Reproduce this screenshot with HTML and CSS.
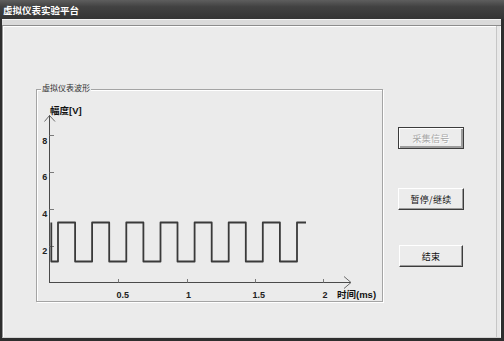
FILE: index.html
```html
<!DOCTYPE html>
<html lang="zh-CN">
  <head>
    <meta charset="UTF-8" />
    <title>虚拟仪表实验平台</title>
    <link rel="stylesheet" href="styles.css">
  </head>
  <body>
    <div class="window">
      <div class="titlebar">虚拟仪表实验平台</div>
      <div class="menubar"></div>
      <div class="client">
        <div class="group">
          <div class="group-title">虚拟仪表波形</div>
          <svg class="chart" width="345" height="211" viewBox="37 90 345 211">
            <!-- y axis -->
            <line class="axis" x1="49.5" y1="283" x2="49.5" y2="115" />
            <polyline class="arrow" points="44.5,121.5 49.5,115.5 55,121.5" />
            <line class="tick" x1="49.5" y1="135.5" x2="54" y2="135.5" />
            <line class="tick" x1="49.5" y1="172.5" x2="54" y2="172.5" />
            <line class="tick" x1="49.5" y1="209.5" x2="54" y2="209.5" />
            <line class="tick" x1="49.5" y1="246.5" x2="54" y2="246.5" />
            <text class="num" x="42.3" y="144.3">8</text>
            <text class="num" x="42.3" y="180.3">6</text>
            <text class="num" x="42.3" y="217.3">4</text>
            <text class="num" x="42.3" y="254.3">2</text>
            <text class="axis-label" x="50" y="114">幅度[V]</text>

            <!-- x axis -->
            <line class="axis" x1="49" y1="282.5" x2="351" y2="282.5" />
            <polyline class="arrow" points="344,276.5 351,282.5 344,288.5" />
            <line class="tick" x1="118.5" y1="282.5" x2="118.5" y2="279" />
            <line class="tick" x1="187.5" y1="282.5" x2="187.5" y2="279" />
            <line class="tick" x1="255.5" y1="282.5" x2="255.5" y2="279" />
            <line class="tick" x1="323.5" y1="282.5" x2="323.5" y2="279" />
            <text class="num" x="116.5" y="298">0.5</text>
            <text class="num" x="186" y="298">1</text>
            <text class="num" x="252.5" y="298">1.5</text>
            <text class="num" x="322.5" y="298">2</text>
            <text class="axis-label" x="337" y="298">时间(ms)</text>

            <!-- square wave -->
            <path class="wave" d="M51.3,222.5 V261.5 H58 V222.5 H75.1 V261.5 H92.1 V222.5 H109.2 V261.5 H126.3 V222.5 H143.4 V261.5 H160.5 V222.5 H177.5 V261.5 H194.6 V222.5 H211.7 V261.5 H228.7 V222.5 H245.8 V261.5 H262.8 V222.5 H279.9 V261.5 H297 V222.5 H306" />
          </svg>
        </div>
        <div class="buttons">
          <button class="btn btn-default" disabled>采集信号</button>
          <button class="btn btn-pause">暂停/继续</button>
          <button class="btn btn-end">结束</button>
        </div>
      </div>
    </div>
  </body>
</html>
```

FILE: styles.css
```css
body {
  margin: 0;
  background: #ebebeb;
  font-family: "Noto Sans CJK SC", "Liberation Sans", sans-serif;
}

.window {
  width: 504px;
  height: 341px;
  box-sizing: border-box;
  border-left: 2px solid #2e2e2e;
  border-right: 3px solid #2e2e2e;
  border-bottom: 3px solid #2e2e2e;
  background: #ebebeb;
  display: flex;
  flex-direction: column;
}

.titlebar {
  height: 19px;
  margin: 0 -3px 0 -2px;
  padding-left: 3px;
  background: linear-gradient(#5e5e5e, #424242 35%, #343434);
  color: #fff;
  font-size: 9.5px;
  font-weight: 700;
  line-height: 21px;
  white-space: nowrap;
}

.menubar {
  height: 5px;
  border-top: 1px solid #f2f2f2;
  border-bottom: 1px solid #8c8c8c;
  background: #dadada;
  box-shadow: 0 1px 0 #fff;
}

.client {
  flex: 1;
  display: flex;
  align-items: flex-start;
  border-left: 1px solid #9a9a9a;
  border-right: 1px solid #fafafa;
  border-bottom: 1px solid #d4d4d4;
  box-shadow: inset 1px 0 0 #fff, inset -3px 0 0 #e8e8e8, inset -4px 0 0 #c6c6c6;
}

.group {
  width: 347px;
  height: 213px;
  box-sizing: border-box;
  margin: 63px 0 0 33px;
  border: 1px solid #a4a4a4;
  box-shadow: inset 1px 1px 0 #fff, 1px 1px 0 #fff;
}

.group-title {
  width: max-content;
  height: 10px;
  margin: -7px 0 0 4px;
  padding: 0 1px;
  background: #ebebeb;
  color: #333;
  font-size: 8px;
  line-height: 10px;
}

.chart {
  display: block;
  margin-top: -3px;
}

.axis {
  stroke: #4a4a4a;
  stroke-width: 1;
}

.arrow {
  fill: none;
  stroke: #6a6a6a;
  stroke-width: 1;
}

.tick {
  stroke: #7a7a7a;
  stroke-width: 1;
}

.num {
  font-family: "Liberation Sans", sans-serif;
  font-size: 9px;
  font-weight: 700;
  fill: #222;
}

.axis-label {
  font-family: "Liberation Sans", "Noto Sans CJK SC", sans-serif;
  font-size: 9.5px;
  font-weight: 700;
  fill: #111;
}

.wave {
  fill: none;
  stroke: #3a3a3a;
  stroke-width: 1.8;
  stroke-linejoin: round;
}

.buttons {
  display: flex;
  flex-direction: column;
  margin: 101px 0 0 15px;
}

.btn {
  width: 66px;
  height: 22px;
  padding: 0;
  background: #ececec;
  border: 1px solid;
  border-color: #fff #3c3c3c #3c3c3c #fff;
  box-shadow: inset -1px -1px 0 #9c9c9c;
  font-family: "Noto Sans CJK SC", sans-serif;
  font-size: 9px;
  color: #111;
  letter-spacing: 0.3px;
}

.btn-default {
  border-color: #3c3c3c;
  box-shadow: inset 1px 1px 0 #fff, inset -2px -2px 0 #9c9c9c;
  color: #a6a6a6;
  text-shadow: 1px 1px 0 #fff;
}

.btn-pause {
  margin-top: 39px;
}

.btn-end {
  width: 64px;
  margin: 35px 0 0 1px;
}
```
